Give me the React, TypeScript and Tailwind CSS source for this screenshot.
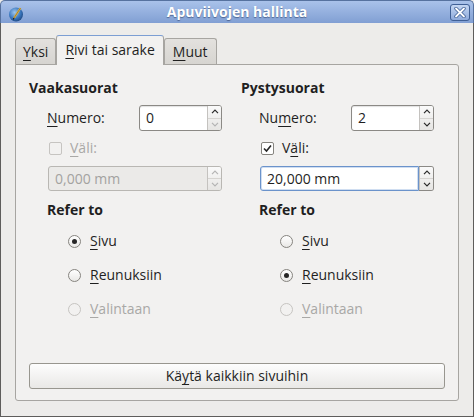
import React from "react";

const U = ({ children }: { children: React.ReactNode }) => (
  <span className="underline decoration-1 underline-offset-[3px]">{children}</span>
);

const Chevron = ({ up, light }: { up?: boolean; light?: boolean }) => (
  <svg width="8" height="5" viewBox="0 0 8 5">
    <path
      d={up ? "M1 4.2 L4 1.2 L7 4.2" : "M1 0.8 L4 3.8 L7 0.8"}
      fill="none"
      stroke={light ? "#b4b4b4" : "#2a2a2a"}
      strokeWidth="1.2"
    />
  </svg>
);

const SpinButtons = ({ upLight, downLight }: { upLight?: boolean; downLight?: boolean }) => (
  <div className="flex w-[14px] flex-col border-l border-[#c4c2bf] bg-gradient-to-b from-[#fafafa] to-[#e6e5e3]">
    <div className="flex flex-1 items-center justify-center border-b border-[#d6d4d1]">
      <Chevron up light={upLight} />
    </div>
    <div className="flex flex-1 items-center justify-center">
      <Chevron light={downLight} />
    </div>
  </div>
);

const Spin = ({ value, downLight }: { value: string; downLight?: boolean }) => (
  <div className="flex h-[26px] w-[83px] overflow-hidden rounded-[3px] border border-[#8b8985] bg-white shadow-[inset_0_1px_1px_rgba(0,0,0,0.12)]">
    <div className="flex flex-1 items-center pl-[6px] text-[#1f1f1f]">{value}</div>
    <SpinButtons downLight={downLight} />
  </div>
);

const Radio = ({ checked, disabled }: { checked?: boolean; disabled?: boolean }) => (
  <div
    className={
      "flex h-[13px] w-[13px] items-center justify-center rounded-full border " +
      (disabled
        ? "border-[#c6c4c1] bg-[#f2f1f0]"
        : "border-[#86847f] bg-gradient-to-b from-[#ffffff] to-[#e9e8e6]")
    }
  >
    {checked && <div className="h-[5px] w-[5px] rounded-full bg-[#262626]" />}
  </div>
);

const Check = ({ checked, disabled }: { checked?: boolean; disabled?: boolean }) => (
  <div
    className={
      "flex h-[13px] w-[13px] items-center justify-center rounded-[2px] border " +
      (disabled ? "border-[#c6c4c1] bg-[#f2f1f0]" : "border-[#86847f] bg-white")
    }
  >
    {checked && (
      <svg width="9" height="9" viewBox="0 0 9 9">
        <path d="M1 4.5 L3.5 7 L8 1.5" fill="none" stroke="#262626" strokeWidth="1.6" />
      </svg>
    )}
  </div>
);

const RadioRow = ({
  label,
  checked,
  disabled,
  mt,
}: {
  label: React.ReactNode;
  checked?: boolean;
  disabled?: boolean;
  mt: string;
}) => (
  <div className={"flex h-[18px] items-center gap-[9px] " + mt}>
    <Radio checked={checked} disabled={disabled} />
    <span className={disabled ? "text-[#a9a8a6]" : "text-[#1f1f1f]"}>{label}</span>
  </div>
);

const Column = ({ right }: { right?: boolean }) => (
  <div className="flex w-[212px] shrink-0 flex-col">
    <div className="flex h-[18px] items-center font-bold text-[#1f1f1f]">
      {right ? "Pystysuorat" : "Vaakasuorat"}
    </div>
    <div className="ml-[18px] mt-[8px] flex items-center">
      <div className="w-[92px] text-[#1f1f1f]">
        {right ? (
          <>
            Nu<U>m</U>ero:
          </>
        ) : (
          <>
            <U>N</U>umero:
          </>
        )}
      </div>
      <Spin value={right ? "2" : "0"} downLight={!right} />
    </div>
    <div className="ml-[20px] mt-[8px] flex h-[18px] items-center gap-[8px]">
      <Check checked={right} disabled={!right} />
      <span className={right ? "text-[#1f1f1f]" : "text-[#a9a8a6]"}>
        {right ? (
          <>
            V<U>ä</U>li:
          </>
        ) : (
          <>
            <U>V</U>äli:
          </>
        )}
      </span>
    </div>
    {right ? (
      <div className="ml-[19px] mt-[9px] flex h-[25px] w-[174px]">
        <div className="flex flex-1 items-center rounded-l-[3px] border border-[#6b93cb] bg-white pl-[6px] text-[#1f1f1f] shadow-[inset_0_0_0_1px_rgba(120,160,215,0.35)]">
          20,000 mm
        </div>
        <div className="flex overflow-hidden rounded-r-[3px] border border-l-0 border-[#8b8985]">
          <SpinButtons />
        </div>
      </div>
    ) : (
      <div className="ml-[19px] mt-[9px] flex h-[25px] w-[174px] overflow-hidden rounded-[3px] border border-[#b9b7b3] bg-[#ebeae8]">
        <div className="flex flex-1 items-center pl-[6px] text-[#a3a2a0]">0,000 mm</div>
        <SpinButtons upLight downLight />
      </div>
    )}
    <div className="ml-[18px] mt-[10px] flex h-[18px] items-center font-bold text-[#1f1f1f]">Refer to</div>
    <div className="ml-[39px] flex flex-col">
      <RadioRow mt="mt-[13px]" checked={!right} label={<><U>S</U>ivu</>} />
      <RadioRow mt="mt-[16px]" checked={right} label={<><U>R</U>eunuksiin</>} />
      <RadioRow mt="mt-[16px]" disabled label={<><U>V</U>alintaan</>} />
    </div>
  </div>
);

export default function App() {
  return (
    <div className="flex h-[417px] w-[474px] flex-col overflow-hidden bg-[#edecea] font-['Open_Sans',sans-serif] text-[14px] leading-[18px]">
      {/* Title bar */}
      <div className="relative flex h-[23px] shrink-0 items-center justify-center rounded-t-[5px] border border-b-0 border-[#56729f] bg-gradient-to-b from-[#a9c2ea] to-[#819fd3]">
        <svg className="absolute left-[7px] top-[5px]" width="16" height="16" viewBox="0 0 16 16">
          <defs>
            <radialGradient id="g" cx="0.4" cy="0.35" r="0.7">
              <stop offset="0" stopColor="#9cc6ee" />
              <stop offset="0.6" stopColor="#3b78bf" />
              <stop offset="1" stopColor="#1d467f" />
            </radialGradient>
          </defs>
          <circle cx="8" cy="8.5" r="7" fill="url(#g)" />
          <path d="M12.5 2 L6 12" stroke="#e0b84a" strokeWidth="2" />
          <path d="M12.5 2 L6 12" stroke="#7a5a20" strokeWidth="0.6" />
          <path d="M6 12 L5.2 13.6" stroke="#222" strokeWidth="1.2" />
        </svg>
        <span className="text-[14px] font-bold text-white [text-shadow:0_1px_1px_rgba(30,50,90,0.55)]">
          Apuviivojen hallinta
        </span>
        <div className="absolute right-[3px] top-[3px] flex h-[17px] w-[20px] items-center justify-center rounded-[3px] border border-[#3f5f95] bg-gradient-to-b from-[#c4d6f2] to-[#8eaadb]">
          <svg width="12" height="11" viewBox="0 0 12 11">
            <path d="M2 1.5 L10 9.5 M10 1.5 L2 9.5" stroke="#3f5f95" strokeWidth="3.4" strokeLinecap="round" />
            <path d="M2 1.5 L10 9.5 M10 1.5 L2 9.5" stroke="#ffffff" strokeWidth="1.8" strokeLinecap="round" />
          </svg>
        </div>
      </div>
      {/* Body */}
      <div className="flex flex-1 flex-col border-x border-b border-[#5e5d5b] px-[14px] pb-[15px] pt-[12px]">
        <div className="flex h-[30px] items-end">
          <div className="flex h-[27px] items-center rounded-t-[3px] border border-b-0 border-[#a7a5a1] bg-gradient-to-b from-[#e3e1de] to-[#d6d4d0] px-[7px] text-[#1f1f1f]">
            <U>Y</U>ksi
          </div>
          <div className="relative z-10 flex h-[30px] items-center rounded-t-[3px] border border-b-0 border-[#a7a5a1] border-t-[#7c9ed3] bg-[#f2f1f0] px-[8px] pb-[2px] text-[#1f1f1f]">
            <U>R</U>ivi tai sarake
          </div>
          <div className="flex h-[27px] items-center rounded-t-[3px] border border-b-0 border-[#a7a5a1] bg-gradient-to-b from-[#e3e1de] to-[#d6d4d0] px-[8px] text-[#1f1f1f]">
            <U>M</U>uut
          </div>
        </div>
        <div className="-mt-px flex flex-1 flex-col rounded-[3px] rounded-tl-none border border-[#a7a5a1] bg-[#f2f1f0] px-[13px] pb-[11px] pt-[14px]">
          <div className="flex">
            <Column />
            <Column right />
          </div>
          <div className="mt-auto flex h-[26px] items-center justify-center rounded-[3px] border border-[#98968f] bg-gradient-to-b from-[#fdfdfd] to-[#e9e8e6] text-[#1f1f1f]">
            Kä<U>y</U>tä kaikkiin sivuihin
          </div>
        </div>
      </div>
    </div>
  );
}
